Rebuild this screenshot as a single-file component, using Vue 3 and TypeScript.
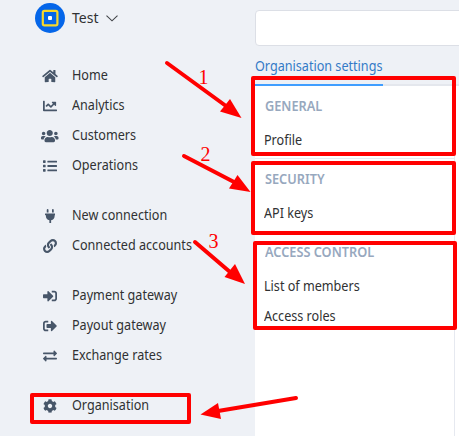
<script setup lang="ts">
interface NavItem {
  label: string
  viewBox: string
  width: number
  path: string
}

interface SettingsGroup {
  title: string
  items: string[]
}

const nav: NavItem[][] = [
  [
    {
      label: 'Home', viewBox: '0 0 576 512', width: 16,
      path: 'M280.37 148.26L96 300.11V464a16 16 0 0 0 16 16l112.06-.29a16 16 0 0 0 15.92-16V368a16 16 0 0 1 16-16h64a16 16 0 0 1 16 16v95.64a16 16 0 0 0 16 16.05L464 480a16 16 0 0 0 16-16V300L295.67 148.26a12.19 12.19 0 0 0-15.3 0zM571.6 251.47L488 182.56V44.05a12 12 0 0 0-12-12h-56a12 12 0 0 0-12 12v72.61L318.47 43a48 48 0 0 0-61 0L4.34 251.47a12 12 0 0 0-1.6 16.9l25.5 31A12 12 0 0 0 45.15 301l235.22-193.74a12.19 12.19 0 0 1 15.3 0L530.9 301a12 12 0 0 0 16.9-1.6l25.5-31a12 12 0 0 0-1.7-16.93z',
    },
    {
      label: 'Analytics', viewBox: '0 0 512 512', width: 14,
      path: 'M496 384H64V80c0-8.84-7.16-16-16-16H16C7.16 64 0 71.16 0 80v336c0 17.67 14.33 32 32 32h464c8.84 0 16-7.16 16-16v-32c0-8.84-7.16-16-16-16zM464 96H345.94c-21.38 0-32.09 25.85-16.97 40.97l32.4 32.4L288 242.75l-73.37-73.37c-12.5-12.5-32.76-12.5-45.25 0l-68.69 68.69c-6.25 6.25-6.25 16.38 0 22.63l22.62 22.62c6.25 6.25 16.38 6.25 22.63 0L192 237.25l73.37 73.37c12.5 12.5 32.76 12.5 45.25 0l96-96 32.4 32.4c15.12 15.12 40.97 4.41 40.97-16.97V112c.01-8.84-7.15-16-15.99-16z',
    },
    {
      label: 'Customers', viewBox: '0 0 640 512', width: 17.5,
      path: 'M96 224c35.3 0 64-28.7 64-64s-28.7-64-64-64-64 28.7-64 64 28.7 64 64 64zm448 0c35.3 0 64-28.7 64-64s-28.7-64-64-64-64 28.7-64 64 28.7 64 64 64zm32 32h-64c-17.6 0-33.5 7.1-45.1 18.6 40.3 22.1 68.9 62 75.1 109.4h66c17.7 0 32-14.3 32-32v-32c0-35.3-28.7-64-64-64zm-256 0c61.9 0 112-50.1 112-112S381.9 32 320 32 208 82.1 208 144s50.1 112 112 112zm76.8 32h-8.3c-20.8 10-43.9 16-68.5 16s-47.6-6-68.5-16h-8.3C179.6 288 128 339.6 128 403.2V432c0 26.5 21.5 48 48 48h288c26.5 0 48-21.5 48-48v-28.8c0-63.6-51.6-115.2-115.2-115.2zm-223.7-13.4C161.5 263.1 145.6 256 128 256H64c-35.3 0-64 28.7-64 64v32c0 17.7 14.3 32 32 32h65.9c6.3-47.4 34.9-87.3 75.2-109.4z',
    },
    {
      label: 'Operations', viewBox: '0 0 512 512', width: 14,
      path: 'M16 48H80a16 16 0 0 1 16 16V128a16 16 0 0 1-16 16H16a16 16 0 0 1-16-16V64a16 16 0 0 1 16-16zM16 208H80a16 16 0 0 1 16 16V288a16 16 0 0 1-16 16H16a16 16 0 0 1-16-16V224a16 16 0 0 1 16-16zM16 368H80a16 16 0 0 1 16 16V448a16 16 0 0 1-16 16H16a16 16 0 0 1-16-16V384a16 16 0 0 1 16-16zM176 60H496a16 16 0 0 1 16 16V116a16 16 0 0 1-16 16H176a16 16 0 0 1-16-16V76a16 16 0 0 1 16-16zM176 220H496a16 16 0 0 1 16 16V276a16 16 0 0 1-16 16H176a16 16 0 0 1-16-16V236a16 16 0 0 1 16-16zM176 380H496a16 16 0 0 1 16 16V436a16 16 0 0 1-16 16H176a16 16 0 0 1-16-16V396a16 16 0 0 1 16-16z',
    },
  ],
  [
    {
      label: 'New connection', viewBox: '0 0 384 512', width: 10.5,
      path: 'M320 32a32 32 0 0 0-64 0v96h64zm48 128H16a16 16 0 0 0-16 16v32a16 16 0 0 0 16 16h16v32a160.07 160.07 0 0 0 128 156.8V512h64v-99.2A160.07 160.07 0 0 0 352 256v-32h16a16 16 0 0 0 16-16v-32a16 16 0 0 0-16-16zM128 32a32 32 0 0 0-64 0v96h64z',
    },
    {
      label: 'Connected accounts', viewBox: '0 0 512 512', width: 14,
      path: 'M326.612 185.391c59.747 59.809 58.927 155.698.36 214.59-.11.12-.24.25-.36.37l-67.2 67.2c-59.27 59.27-155.699 59.262-214.96 0-59.27-59.26-59.27-155.7 0-214.96l37.106-37.106c9.84-9.84 26.786-3.3 27.294 10.606.648 17.722 3.826 35.527 9.69 52.721 1.986 5.822.567 12.262-3.783 16.612l-13.087 13.087c-28.026 28.026-28.905 73.66-1.155 101.96 28.024 28.579 74.086 28.749 102.325.51l67.2-67.19c28.191-28.191 28.073-73.757 0-101.83-3.701-3.694-7.429-6.564-10.341-8.569a16.037 16.037 0 0 1-6.947-12.606c-.396-10.567 3.348-21.456 11.698-29.806l21.054-21.055c5.521-5.521 14.182-6.199 20.584-1.731a152.482 152.482 0 0 1 20.522 17.197zM467.547 44.449c-59.261-59.262-155.69-59.27-214.96 0l-67.2 67.2c-.12.12-.25.25-.36.37-58.566 58.892-59.387 154.781.36 214.59a152.454 152.454 0 0 0 20.521 17.196c6.402 4.468 15.064 3.789 20.584-1.731l21.054-21.055c8.35-8.35 12.094-19.239 11.698-29.806a16.037 16.037 0 0 0-6.947-12.606c-2.912-2.005-6.64-4.875-10.341-8.569-28.073-28.073-28.191-73.639 0-101.83l67.2-67.19c28.239-28.239 74.3-28.069 102.325.51 27.75 28.3 26.872 73.934-1.155 101.96l-13.087 13.087c-4.35 4.35-5.769 10.79-3.783 16.612 5.864 17.194 9.042 34.999 9.69 52.721.509 13.906 17.454 20.446 27.294 10.606l37.106-37.106c59.271-59.259 59.271-155.699.001-214.959z',
    },
  ],
  [
    {
      label: 'Payment gateway', viewBox: '0 0 512 512', width: 14,
      path: 'M416 448h-84c-6.6 0-12-5.4-12-12v-40c0-6.6 5.4-12 12-12h84c17.7 0 32-14.3 32-32V160c0-17.7-14.3-32-32-32h-84c-6.6 0-12-5.4-12-12V76c0-6.6 5.4-12 12-12h84c53 0 96 43 96 96v192c0 53-43 96-96 96zm-47-201L201 79c-15-15-41-4.5-41 17v96H24c-13.3 0-24 10.7-24 24v96c0 13.3 10.7 24 24 24h136v96c0 21.5 26 32 41 17l168-168c9.3-9.4 9.3-24.6 0-34z',
    },
    {
      label: 'Payout gateway', viewBox: '0 0 512 512', width: 14,
      path: 'M497 273L329 441c-15 15-41 4.5-41-17v-96H152c-13.3 0-24-10.7-24-24v-96c0-13.3 10.7-24 24-24h136V88c0-21.4 25.9-32 41-17l168 168c9.3 9.4 9.3 24.6 0 34zM192 436v-40c0-6.6-5.4-12-12-12H96c-17.7 0-32-14.3-32-32V160c0-17.7 14.3-32 32-32h84c6.6 0 12-5.4 12-12V76c0-6.6-5.4-12-12-12H96c-53 0-96 43-96 96v192c0 53 43 96 96 96h84c6.6 0 12-5.4 12-12z',
    },
    {
      label: 'Exchange rates', viewBox: '0 0 512 512', width: 14,
      path: 'M0 168v-16c0-13.255 10.745-24 24-24h360V80c0-21.367 25.899-32.042 40.971-16.971l80 80c9.372 9.373 9.372 24.569 0 33.941l-80 80C409.956 271.982 384 261.456 384 240v-48H24c-13.255 0-24-10.745-24-24zm488 152H128v-48c0-21.314-25.862-32.08-40.971-16.971l-80 80c-9.372 9.373-9.372 24.569 0 33.941l80 80C102.057 463.997 128 453.437 128 432v-48h360c13.255 0 24-10.745 24-24v-16c0-13.255-10.745-24-24-24z',
    },
  ],
  [
    {
      label: 'Organisation', viewBox: '0 0 512 512', width: 14,
      path: 'M487.4 315.7l-42.6-24.6c4.3-23.2 4.3-47 0-70.2l42.6-24.6c4.9-2.8 7.1-8.6 5.5-14-11.1-35.6-30-67.8-54.7-94.6-3.8-4.1-10-5.1-14.8-2.3L380.8 110c-17.9-15.4-38.5-27.3-60.8-35.1V25.8c0-5.6-3.9-10.5-9.4-11.7-36.7-8.2-74.3-7.8-109.2 0-5.5 1.2-9.4 6.1-9.4 11.7V75c-22.2 7.9-42.8 19.8-60.8 35.1L88.7 85.5c-4.9-2.8-11-1.9-14.8 2.3-24.7 26.7-43.6 58.9-54.7 94.6-1.7 5.4.6 11.2 5.5 14L67.3 221c-4.3 23.2-4.3 47 0 70.2l-42.6 24.6c-4.9 2.8-7.1 8.6-5.5 14 11.1 35.6 30 67.8 54.7 94.6 3.8 4.1 10 5.1 14.8 2.3l42.6-24.6c17.9 15.4 38.5 27.3 60.8 35.1v49.2c0 5.6 3.9 10.5 9.4 11.7 36.7 8.2 74.3 7.8 109.2 0 5.5-1.2 9.4-6.1 9.4-11.7v-49.2c22.2-7.9 42.8-19.8 60.8-35.1l42.6 24.6c4.9 2.8 11 1.9 14.8-2.3 24.7-26.7 43.6-58.9 54.7-94.6 1.5-5.5-.7-11.3-5.6-14.1zM256 336c-44.1 0-80-35.9-80-80s35.9-80 80-80 80 35.9 80 80-35.9 80-80 80z',
    },
  ],
]

const groups: SettingsGroup[] = [
  { title: 'GENERAL', items: ['Profile'] },
  { title: 'SECURITY', items: ['API keys'] },
  { title: 'ACCESS CONTROL', items: ['List of members', 'Access roles'] },
]
</script>

<template>
  <div class="page">
    <aside class="sidebar">
      <header class="account">
        <svg class="logo" viewBox="0 0 30 30">
          <circle cx="15" cy="15" r="15" fill="#0566e9" />
          <rect x="7.800" y="7.800" width="14.600" height="14.600" rx="1.600" fill="none" stroke="#f8d72a" stroke-width="2.200" />
          <rect x="13" y="13" width="4" height="4" rx="1" fill="#fff" />
        </svg>
        <span class="account-name">Test</span>
        <svg class="chevron" viewBox="0 0 12 7"><path d="M.5.6 6 5.8 11.500.6" /></svg>
      </header>
      <nav class="nav">
        <ul v-for="(section, i) in nav" :key="i" class="section">
          <li v-for="item in section" :key="item.label" class="nav-item">
            <span class="icon-box">
              <svg class="icon" :viewBox="item.viewBox" :width="item.width" height="14">
                <path :d="item.path" />
              </svg>
            </span>
            <span class="label">{{ item.label }}</span>
          </li>
        </ul>
      </nav>
    </aside>

    <main class="main">
      <div class="top">
        <div class="search"></div>
        <div class="tabs"><div class="tab"><span class="label">Organisation settings</span></div></div>
      </div>
      <div class="panel">
        <section v-for="group in groups" :key="group.title" class="group">
          <h3 class="title"><span class="label">{{ group.title }}</span></h3>
          <div v-for="item in group.items" :key="item" class="entry">
            <span class="label">{{ item }}</span>
          </div>
        </section>
      </div>
    </main>

    <svg class="marks" viewBox="0 0 459 436">
      <g fill="none" stroke="#f00" stroke-width="4" stroke-linejoin="round" stroke-linecap="round">
        <rect x="253" y="78" width="201" height="76" />
        <rect x="253" y="163" width="201" height="70" />
        <rect x="255" y="243" width="200" height="85" />
        <rect x="32" y="395" width="157" height="27" />
        <path d="M167 63 226 106M184 156 234 182M195 242 230 272M296 398 218 411" />
      </g>
      <g fill="#f00">
        <path d="M241.500 118 220 111.500 230 99z" />
        <path d="M250.500 192 229 188.500 237.500 175z" />
        <path d="M245 284 224.500 277 235 264z" />
        <path d="M200.500 414.500 218 403 221 419z" />
        <text x="198.500" y="84">1</text>
        <text x="200.500" y="161">2</text>
        <text x="208.500" y="248">3</text>
      </g>
    </svg>
  </div>
</template>

<style>
body {
  margin: 0;
  overflow: hidden;
}
</style>

<style scoped>
.page {
  position: relative;
  display: flex;
  width: 459px;
  height: 436px;
  overflow: hidden;
  background: #fff;
  color: #303133;
  font: 14px/30px "Noto Sans", sans-serif;
}
.label {
  display: inline-block;
  transform: scaleX(0.9);
  transform-origin: 0 50%;
}
.sidebar {
  width: 255px;
  flex: none;
  box-sizing: border-box;
  padding-left: 35px;
  background: #eef1f6;
}
.account {
  display: flex;
  align-items: center;
  height: 36px;
}
.logo {
  width: 30px;
  height: 30px;
}
.account-name {
  margin-left: 7px;
}
.chevron {
  width: 12px;
  height: 7px;
  margin-left: 8px;
  fill: none;
  stroke: #404347;
  stroke-width: 1.1;
}
.nav {
  display: flex;
  flex-direction: column;
  gap: 20px;
  padding-top: 24px;
}
.section {
  margin: 0;
  padding: 0;
  list-style: none;
}
.nav-item {
  display: flex;
  align-items: center;
  height: 30px;
  white-space: nowrap;
}
.icon-box {
  display: flex;
  justify-content: center;
  width: 30px;
  margin-right: 7px;
  padding-top: 1px;
}
.icon {
  fill: #475669;
}
.main {
  flex: 1;
  min-width: 0;
}
.top {
  box-sizing: border-box;
  height: 86px;
  padding-top: 10px;
  background: #eef1f6;
}
.search {
  box-sizing: border-box;
  width: 240px;
  height: 36px;
  border: 1px solid #dcdfe6;
  border-radius: 4px;
  background: #fff;
}
.tabs {
  box-sizing: border-box;
  display: flex;
  height: 40px;
  border-bottom: 2px solid #e4e7ed;
}
.tab {
  box-sizing: border-box;
  width: 128px;
  height: 40px;
  border-bottom: 2px solid #409eff;
  color: #337ac7;
  line-height: 40px;
  white-space: nowrap;
}
.panel {
  box-sizing: border-box;
  width: 200px;
  height: 350px;
  border-right: 1px solid #e6e9f0;
}
.group {
  padding: 5px 9px 3px;
  border-bottom: 1px solid #e6e9ee;
}
.group:last-child {
  border: 0;
}
.title {
  margin: 0 1px 4px;
  color: #97a8be;
  font-size: 14px;
  font-weight: 600;
  line-height: 30px;
  white-space: nowrap;
}
.title .label {
  transform: scaleX(0.91);
}
.entry {
  height: 30px;
}
.marks {
  position: absolute;
  inset: 0;
  width: 459px;
  height: 436px;
}
.marks text {
  font: 20px "Liberation Serif", serif;
}
</style>
